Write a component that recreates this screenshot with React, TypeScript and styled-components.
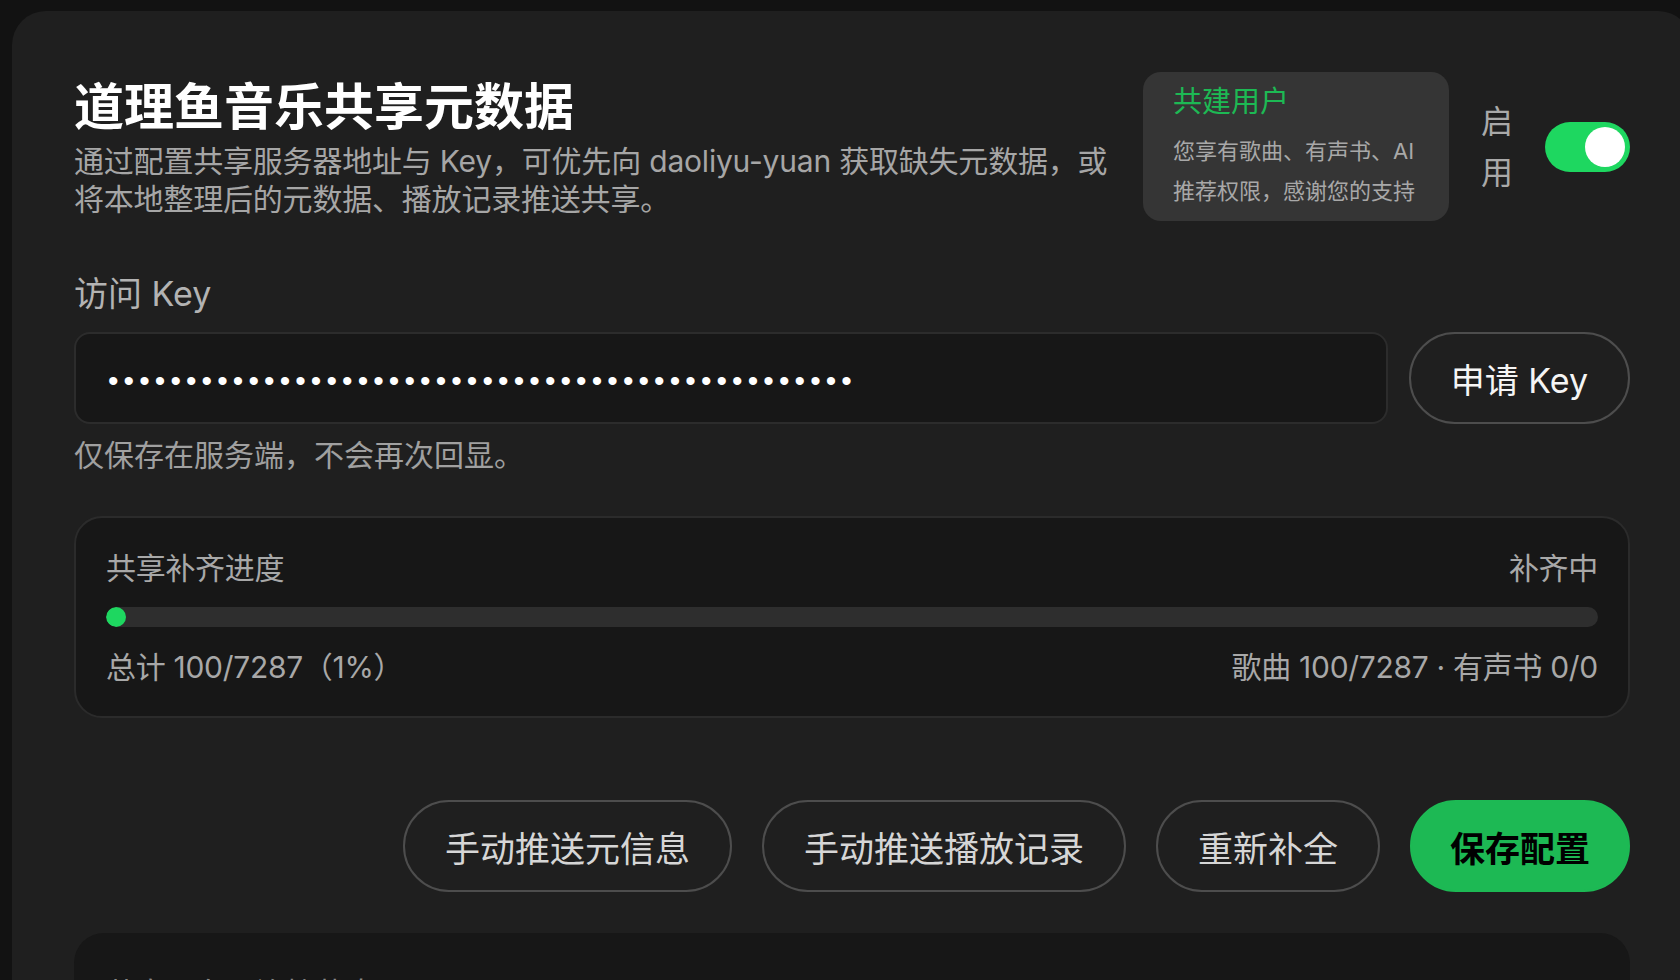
import React from "react";
import styled, { createGlobalStyle } from "styled-components";

const GlobalStyle = createGlobalStyle`
  html, body {
    margin: 0;
    padding: 0;
    background: #121212;
    overflow: hidden;
    width: 1680px;
    height: 980px;
  }
  * { box-sizing: border-box; }
  body {
    font-family: Inter, "Noto Sans CJK SC", sans-serif;
    -webkit-font-smoothing: antialiased;
  }
`;

const Page = styled.div`
  width: 1680px;
  height: 980px;
  overflow: hidden;
  padding: 11px 0 0 12px;
`;

const Card = styled.section`
  width: 1680px;
  min-height: 1200px;
  background: #1f1f1f;
  border-radius: 34px;
  padding: 61px 62px 62px 62px;
  display: flex;
  flex-direction: column;
`;

const Header = styled.header`
  display: flex;
  align-items: center;
  gap: 24px;
`;

const TitleBlock = styled.div`
  flex: 1;
  min-width: 0;
  display: flex;
  flex-direction: column;
  gap: 4px;
`;

const Title = styled.h1`
  margin: 0;
  font-size: 50px;
  line-height: 62px;
  font-weight: 700;
  color: #ffffff;
`;

const Desc = styled.p`
  margin: 0;
  font-size: 30px;
  line-height: 38px;
  letter-spacing: -0.2px;
  color: #a6a6a6;
`;

const HeaderRight = styled.div`
  display: flex;
  align-items: center;
  gap: 32px;
  flex-shrink: 0;
`;

const Badge = styled.div`
  width: 306px;
  background: #353535;
  border-radius: 18px;
  padding: 10px 30px;
  display: flex;
  flex-direction: column;
  gap: 9px;
`;

const BadgeTitle = styled.div`
  font-size: 29px;
  line-height: 40px;
  color: #1db954;
`;

const BadgeBody = styled.div`
  font-size: 22px;
  line-height: 40px;
  color: #a8a8a8;
`;

const ToggleLabel = styled.span`
  width: 32px;
  font-size: 32px;
  line-height: 51px;
  color: #a9a9a9;
`;

const Toggle = styled.button<{ $on: boolean }>`
  position: relative;
  width: 85px;
  height: 50px;
  border: none;
  padding: 0;
  border-radius: 25px;
  background: ${(p) => (p.$on ? "#1ed760" : "#444")};
  cursor: pointer;
`;

const Knob = styled.span<{ $on: boolean }>`
  position: absolute;
  top: 5px;
  left: ${(p) => (p.$on ? "40px" : "5px")};
  width: 40px;
  height: 40px;
  border-radius: 50%;
  background: #ffffff;
`;

const FieldLabel = styled.label`
  margin-top: 49px;
  font-size: 34px;
  line-height: 48px;
  color: #b3b3b3;
`;

const KeyRow = styled.div`
  margin-top: 14px;
  display: flex;
  gap: 21px;
`;

const KeyInput = styled.input`
  flex: 1;
  min-width: 0;
  height: 92px;
  background: #171717;
  border: 2px solid #2c2c2c;
  border-radius: 16px;
  padding: 6px 32px 0;
  color: #ffffff;
  font-family: "Liberation Sans", sans-serif;
  font-size: 30px;
  letter-spacing: 5.1px;
  outline: none;
`;

type Variant = "primary" | "outline" | "bright";

const PillButton = styled.button<{ $variant?: Variant }>`
  height: 92px;
  padding: 0 ${(p) => (p.$variant === "primary" ? 38 : 40)}px;
  border-radius: 46px;
  font-family: Inter, "Noto Sans CJK SC", sans-serif;
  font-size: ${(p) => (p.$variant === "bright" ? 34 : 35)}px;
  font-weight: ${(p) => (p.$variant === "primary" ? 700 : 400)};
  white-space: nowrap;
  cursor: pointer;
  background: ${(p) => (p.$variant === "primary" ? "#1db954" : "transparent")};
  color: ${(p) =>
    p.$variant === "primary" ? "#000000" : p.$variant === "bright" ? "#f5f5f5" : "#d6d6d6"};
  border: 2px solid ${(p) => (p.$variant === "primary" ? "#1db954" : "#4d4d4d")};
`;

const Hint = styled.p`
  margin: 9px 0 0;
  font-size: 30px;
  line-height: 44px;
  color: #a0a0a0;
`;

const ProgressCard = styled.div`
  margin-top: 39px;
  background: #171717;
  border: 2px solid #2b2b2b;
  border-radius: 28px;
  padding: 30px 30px 29px;
  display: flex;
  flex-direction: column;
`;

const ProgressRow = styled.div<{ $gap?: number }>`
  display: flex;
  justify-content: space-between;
  align-items: center;
  font-size: 30px;
  line-height: 40px;
  letter-spacing: -0.3px;
  color: #a8a8a8;
  margin-top: ${(p) => p.$gap ?? 0}px;
`;

const Track = styled.div`
  margin-top: 19px;
  height: 20px;
  border-radius: 10px;
  background: #2e2e2e;
  overflow: hidden;
`;

const Fill = styled.div`
  height: 100%;
  min-width: 14px;
  border-radius: 10px;
  background: #1ed760;
`;

const Actions = styled.div`
  margin-top: 82px;
  display: flex;
  justify-content: flex-end;
  gap: 30px;
`;

const NextCard = styled.div`
  margin-top: 41px;
  background: #171717;
  border-radius: 30px;
  padding: 38px 32px 30px;
  min-height: 200px;
`;

const NextTitle = styled.div`
  font-size: 30px;
  line-height: 44px;
  color: #8a8a8a;
`;

export default function App() {
  const [on, setOn] = React.useState(true);
  const done = 100;
  const total = 7287;
  const pct = (done / total) * 100;

  return (
    <>
      <GlobalStyle />
      <Page>
        <Card>
          <Header>
            <TitleBlock>
              <Title>道理鱼音乐共享元数据</Title>
              <Desc>
                通过配置共享服务器地址与 Key，可优先向 daoliyu-yuan 获取缺失元数据，或将本地整理后的元数据、播放记录推送共享。
              </Desc>
            </TitleBlock>
            <HeaderRight>
              <Badge>
                <BadgeTitle>共建用户</BadgeTitle>
                <BadgeBody>您享有歌曲、有声书、AI推荐权限，感谢您的支持</BadgeBody>
              </Badge>
              <ToggleLabel>启用</ToggleLabel>
              <Toggle $on={on} onClick={() => setOn(!on)} aria-label="启用">
                <Knob $on={on} />
              </Toggle>
            </HeaderRight>
          </Header>

          <FieldLabel htmlFor="key">访问 Key</FieldLabel>
          <KeyRow>
            <KeyInput id="key" type="password" readOnly value={"x".repeat(48)} />
            <PillButton $variant="bright">申请 Key</PillButton>
          </KeyRow>
          <Hint>仅保存在服务端，不会再次回显。</Hint>

          <ProgressCard>
            <ProgressRow>
              <span>共享补齐进度</span>
              <span>补齐中</span>
            </ProgressRow>
            <Track>
              <Fill style={{ width: `${pct}%` }} />
            </Track>
            <ProgressRow $gap={20}>
              <span>总计 100/7287（1%）</span>
              <span>歌曲 100/7287 · 有声书 0/0</span>
            </ProgressRow>
          </ProgressCard>

          <Actions>
            <PillButton $variant="outline">手动推送元信息</PillButton>
            <PillButton $variant="outline">手动推送播放记录</PillButton>
            <PillButton $variant="outline">重新补全</PillButton>
            <PillButton $variant="primary">保存配置</PillButton>
          </Actions>

          <NextCard>
            <NextTitle>共享服务器连接状态</NextTitle>
          </NextCard>
        </Card>
      </Page>
    </>
  );
}
